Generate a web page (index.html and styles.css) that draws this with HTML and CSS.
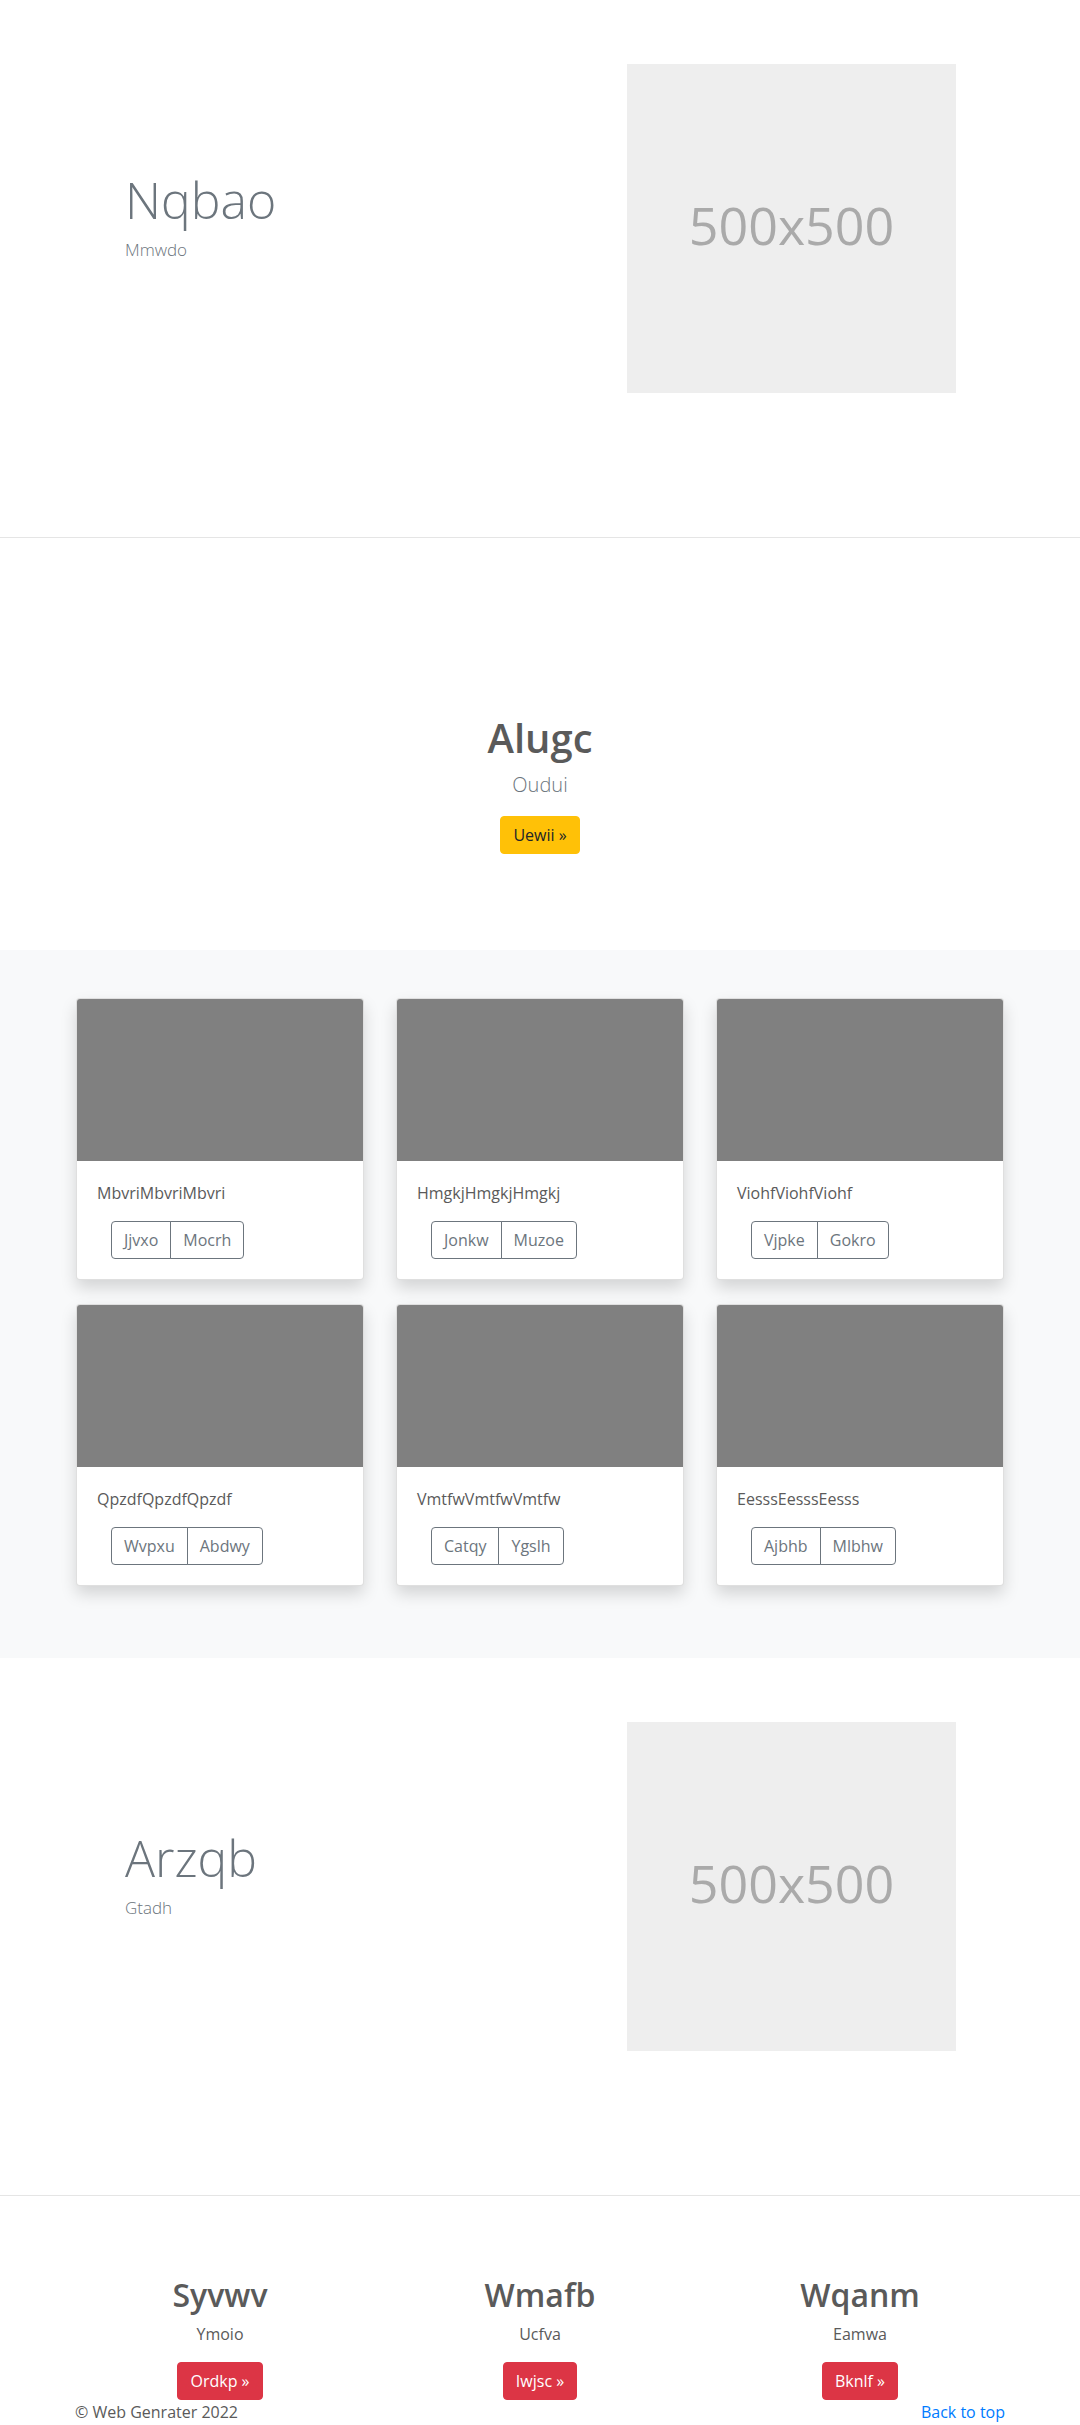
FILE: index.html
```html
<!DOCTYPE html>
<html lang="en">
<head>
<meta charset="utf-8">
<title>Web Genrater</title>
<link rel="stylesheet" href="styles.css">
</head>
<body>
<main>
  <section class="feature">
    <div class="container feature-row">
      <div class="feature-text">
        <h2 class="feature-title">Nqbao</h2>
        <p class="feature-sub">Mmwdo</p>
      </div>
      <div class="placeholder"><span>500x500</span></div>
    </div>
  </section>

  <hr class="divider">

  <section class="intro">
    <h1 class="intro-title">Alugc</h1>
    <p class="lead">Oudui</p>
    <a class="btn btn-warning" href="#">Uewii »</a>
  </section>

  <section class="album">
    <div class="container album-grid">
      <div class="card">
        <div class="card-img"></div>
        <div class="card-body">
          <p class="card-text">MbvriMbvriMbvri</p>
          <div class="btn-group"><button class="btn btn-outline">Jjvxo</button><button class="btn btn-outline">Mocrh</button></div>
        </div>
      </div>
      <div class="card">
        <div class="card-img"></div>
        <div class="card-body">
          <p class="card-text">HmgkjHmgkjHmgkj</p>
          <div class="btn-group"><button class="btn btn-outline">Jonkw</button><button class="btn btn-outline">Muzoe</button></div>
        </div>
      </div>
      <div class="card">
        <div class="card-img"></div>
        <div class="card-body">
          <p class="card-text">ViohfViohfViohf</p>
          <div class="btn-group"><button class="btn btn-outline">Vjpke</button><button class="btn btn-outline">Gokro</button></div>
        </div>
      </div>
      <div class="card">
        <div class="card-img"></div>
        <div class="card-body">
          <p class="card-text">QpzdfQpzdfQpzdf</p>
          <div class="btn-group"><button class="btn btn-outline">Wvpxu</button><button class="btn btn-outline">Abdwy</button></div>
        </div>
      </div>
      <div class="card">
        <div class="card-img"></div>
        <div class="card-body">
          <p class="card-text">VmtfwVmtfwVmtfw</p>
          <div class="btn-group"><button class="btn btn-outline">Catqy</button><button class="btn btn-outline">Ygslh</button></div>
        </div>
      </div>
      <div class="card">
        <div class="card-img"></div>
        <div class="card-body">
          <p class="card-text">EesssEesssEesss</p>
          <div class="btn-group"><button class="btn btn-outline">Ajbhb</button><button class="btn btn-outline">Mlbhw</button></div>
        </div>
      </div>
    </div>
  </section>

  <section class="feature">
    <div class="container feature-row">
      <div class="feature-text">
        <h2 class="feature-title">Arzqb</h2>
        <p class="feature-sub">Gtadh</p>
      </div>
      <div class="placeholder"><span>500x500</span></div>
    </div>
  </section>

  <hr class="divider">

  <section class="container marketing">
    <div class="marketing-col">
      <h2 class="marketing-title">Syvwv</h2>
      <p class="marketing-text">Ymoio</p>
      <a class="btn btn-danger" href="#">Ordkp »</a>
    </div>
    <div class="marketing-col">
      <h2 class="marketing-title">Wmafb</h2>
      <p class="marketing-text">Ucfva</p>
      <a class="btn btn-danger" href="#">Iwjsc »</a>
    </div>
    <div class="marketing-col">
      <h2 class="marketing-title">Wqanm</h2>
      <p class="marketing-text">Eamwa</p>
      <a class="btn btn-danger" href="#">Bknlf »</a>
    </div>
  </section>

  <footer class="container footer">
    <p class="footer-copy">© Web Genrater 2022</p>
    <p class="footer-top"><a href="#">Back to top</a></p>
  </footer>
</main>
</body>
</html>
```

FILE: styles.css
```css
* {
  box-sizing: border-box;
}

html, body {
  margin: 0;
  padding: 0;
}

body {
  font-family: "Open Sans", "Noto Sans", sans-serif;
  font-size: 16px;
  line-height: 1.5;
  color: #5a5a5a;
  background: #fff;
}

.container {
  width: 960px;
  margin: 0 auto;
  padding: 0 15px;
}

/* Featurette */
.feature {
  padding: 64px 0;
}

.feature-row {
  display: flex;
  align-items: flex-start;
}

.feature-text {
  flex: 1;
  padding-left: 50px;
  padding-top: 106px;
}

.feature-title {
  margin: 0 0 9px;
  font-size: 50px;
  font-weight: 300;
  line-height: 1.2;
  color: #6c757d;
}

.feature-sub {
  margin: 0;
  font-size: 17px;
  font-weight: 300;
  line-height: 22px;
  color: #6c757d;
}

.placeholder {
  width: 329px;
  height: 329px;
  margin-right: 49px;
  padding-bottom: 8px;
  background: #eeeeee;
  color: #aaaaaa;
  font-size: 52px;
  display: flex;
  align-items: center;
  justify-content: center;
}

.divider {
  margin: 80px 0;
  height: 0;
  border: 0;
  border-top: 1px solid rgba(0, 0, 0, 0.1);
}

/* Intro */
.intro {
  padding: 96px 0;
  text-align: center;
}

.intro-title {
  margin: 0 0 8px;
  font-size: 40px;
  font-weight: 600;
  line-height: 48px;
  color: #5a5a5a;
}

.lead {
  margin: 0 0 16px;
  font-size: 20px;
  font-weight: 300;
  line-height: 30px;
  color: #6c757d;
}

/* Buttons */
.btn {
  display: inline-block;
  padding: 6px 12px;
  font-family: inherit;
  font-size: 16px;
  line-height: 24px;
  font-weight: 400;
  border: 1px solid transparent;
  border-radius: 4px;
  text-decoration: none;
  cursor: pointer;
}

.btn-warning {
  background: #ffc107;
  border-color: #ffc107;
  color: #212529;
}

.btn-danger {
  background: #dc3545;
  border-color: #dc3545;
  color: #fff;
}

.btn-group {
  display: inline-flex;
  margin-left: 14px;
}

.btn-outline {
  background: transparent;
  color: #6c757d;
  border-color: #6c757d;
}

.btn-group .btn-outline:first-child {
  border-top-right-radius: 0;
  border-bottom-right-radius: 0;
}

.btn-group .btn-outline + .btn-outline {
  margin-left: -1px;
  border-top-left-radius: 0;
  border-bottom-left-radius: 0;
}

/* Album */
.album {
  background: #f8f9fa;
  padding: 48px 0 72px;
}

.album-grid {
  display: grid;
  grid-template-columns: repeat(3, 1fr);
  column-gap: 32px;
  row-gap: 24px;
  padding: 0 16px;
}

.card {
  background: #fff;
  border: 1px solid rgba(0, 0, 0, 0.125);
  border-radius: 4px;
  overflow: hidden;
  box-shadow: 0 8px 16px rgba(0, 0, 0, 0.15);
}

.card-img {
  height: 162px;
  background: #808080;
}

.card-body {
  padding: 20px;
}

.card-text {
  margin: 0 0 16px;
  color: #5a5a5a;
}

/* Marketing */
.marketing {
  display: grid;
  grid-template-columns: repeat(3, 1fr);
  padding: 0;
  text-align: center;
}

.marketing-title {
  margin: 0 0 8px;
  font-size: 32px;
  font-weight: 600;
  line-height: 1.2;
  color: #5a5a5a;
}

.marketing-text {
  margin: 0 0 16px;
}

/* Footer */
.footer {
  display: flex;
  justify-content: space-between;
}

.footer p {
  margin: 0 0 16px;
}

.footer a {
  color: #007bff;
  text-decoration: none;
}
```
